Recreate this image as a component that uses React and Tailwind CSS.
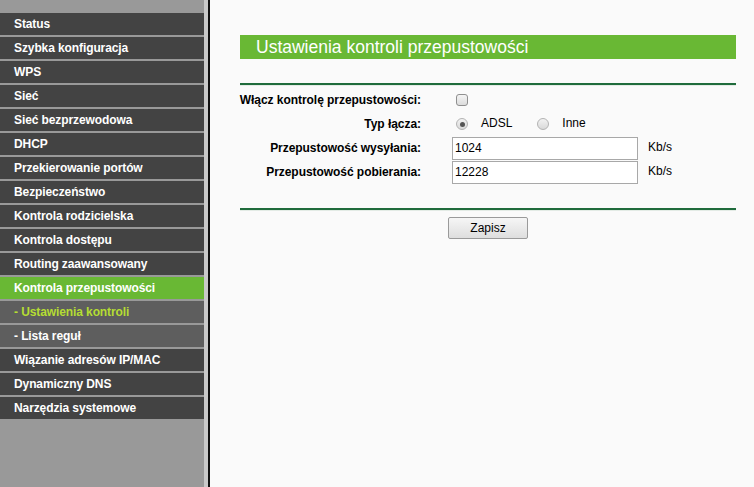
import React from 'react'

const MENU = [
  { label: 'Status' },
  { label: 'Szybka konfiguracja' },
  { label: 'WPS' },
  { label: 'Sieć' },
  { label: 'Sieć bezprzewodowa' },
  { label: 'DHCP' },
  { label: 'Przekierowanie portów' },
  { label: 'Bezpieczeństwo' },
  { label: 'Kontrola rodzicielska' },
  { label: 'Kontrola dostępu' },
  { label: 'Routing zaawansowany' },
  { label: 'Kontrola przepustowości', active: true },
  { label: '- Ustawienia kontroli', sub: true, current: true },
  { label: '- Lista reguł', sub: true },
  { label: 'Wiązanie adresów IP/MAC' },
  { label: 'Dynamiczny DNS' },
  { label: 'Narzędzia systemowe' },
]

const MenuItem = ({ item }) => {
  let bg = 'bg-[#434343]'
  if (item.active) bg = 'bg-[#69b834]'
  else if (item.sub) bg = 'bg-[#5e5e5e]'
  const color = item.current ? 'text-[#b5dd33]' : 'text-white'
  return (
    <div className={`h-[22px] flex items-center pl-[14px] text-[12px] font-bold tracking-[-0.1px] ${bg} ${color}`}>
      {item.label}
    </div>
  )
}

const Sidebar = () => (
  <aside className="flex shrink-0 h-full">
    <nav className="w-[204px] bg-[#999999] pt-[13px] flex flex-col gap-[2px]">
      {MENU.map((item) => (
        <MenuItem key={item.label} item={item} />
      ))}
    </nav>
    <div className="w-[4px] bg-[#c9c9c9]" />
    <div className="w-[2px] bg-[#111111]" />
  </aside>
)

const Checkbox = () => (
  <span className="ml-[4px] w-[12px] h-[12px] rounded-[3px] border border-[#8f8f8f] bg-gradient-to-b from-[#f4f4f4] to-[#dcdcdc]" />
)

const Radio = ({ checked }) => (
  <span className="w-[12px] h-[12px] rounded-full border border-[#b3b3b3] bg-gradient-to-b from-[#f2f2f2] to-[#d9d9d9] flex items-center justify-center">
    {checked && <span className="w-[5px] h-[5px] rounded-full bg-[#555555]" />}
  </span>
)

const Rule = () => (
  <div>
    <div className="h-[2px] bg-[#1f6b3c]" />
    <div className="h-[1px] bg-[#e3ebe5]" />
  </div>
)

const Row = ({ label, children }) => (
  <div className="grid grid-cols-[181px_1fr] gap-x-[31px] h-[24px] items-center">
    <div className="flex justify-end whitespace-nowrap font-bold text-[12px] tracking-[-0.05px] text-black">
      {label}
    </div>
    <div className="flex items-center">{children}</div>
  </div>
)

const RateInput = ({ value }) => (
  <>
    <div className="w-[186px] h-[23px] border border-[#a8a8a8] bg-white flex items-center pl-[2px] text-[12px] text-black">
      {value}
    </div>
    <span className="ml-[10px] -mt-[3px] text-[12px] text-black">Kb/s</span>
  </>
)

export default function App() {
  return (
    <div className="w-[754px] h-[487px] flex overflow-hidden font-['Liberation_Sans',Arial,sans-serif]">
      <Sidebar />
      <main className="flex-1 bg-[#fafafa] pl-[30px] pt-[35px]">
        <div className="w-[496px]">
          <h1 className="h-[24px] bg-[#69b834] text-white text-[17.5px] pl-[16px] flex items-center">
            Ustawienia kontroli przepustowości
          </h1>

          <div className="mt-[24px]">
            <Rule />
          </div>

          <div className="mt-[2px]">
            <Row label="Włącz kontrolę przepustowości:">
              <Checkbox />
            </Row>
            <Row label="Typ łącza:">
              <span className="ml-[4px]">
                <Radio checked />
              </span>
              <span className="ml-[13px] text-[12px] -mt-[2px]">ADSL</span>
              <span className="ml-[25px]">
                <Radio />
              </span>
              <span className="ml-[13px] text-[12px] -mt-[2px]">Inne</span>
            </Row>
            <Row label="Przepustowość wysyłania:">
              <RateInput value="1024" />
            </Row>
            <Row label="Przepustowość pobierania:">
              <RateInput value="12228" />
            </Row>
          </div>

          <div className="mt-[24px]">
            <Rule />
          </div>

          <div className="flex justify-center mt-[6px]">
            <button className="w-[80px] h-[22px] rounded-[2px] border border-[#9a9a9a] bg-gradient-to-b from-[#f6f6f6] to-[#dedede] text-[12px] text-black">
              Zapisz
            </button>
          </div>
        </div>
      </main>
    </div>
  )
}
